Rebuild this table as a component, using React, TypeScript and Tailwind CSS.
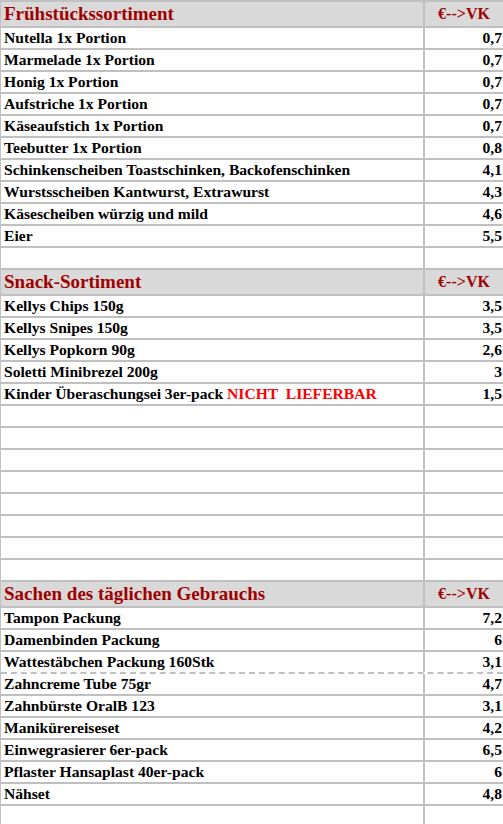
import React from 'react'

type Row = { name?: string; price?: string; note?: string; dashed?: boolean }

const sections: { title: string; rows: Row[] }[] = [
  {
    title: 'Frühstückssortiment',
    rows: [
      { name: 'Nutella 1x Portion', price: '0,7' },
      { name: 'Marmelade 1x Portion', price: '0,7' },
      { name: 'Honig 1x Portion', price: '0,7' },
      { name: 'Aufstriche 1x Portion', price: '0,7' },
      { name: 'Käseaufstich 1x Portion', price: '0,7' },
      { name: 'Teebutter 1x Portion', price: '0,8' },
      { name: 'Schinkenscheiben Toastschinken, Backofenschinken', price: '4,1' },
      { name: 'Wurstsscheiben Kantwurst, Extrawurst', price: '4,3' },
      { name: 'Käsescheiben würzig und mild', price: '4,6' },
      { name: 'Eier', price: '5,5' },
      {},
    ],
  },
  {
    title: 'Snack-Sortiment',
    rows: [
      { name: 'Kellys Chips 150g', price: '3,5' },
      { name: 'Kellys Snipes 150g', price: '3,5' },
      { name: 'Kellys Popkorn 90g', price: '2,6' },
      { name: 'Soletti Minibrezel 200g', price: '3' },
      { name: 'Kinder Überaschungsei 3er-pack', note: 'NICHT  LIEFERBAR', price: '1,5' },
      {}, {}, {}, {}, {}, {}, {}, {},
    ],
  },
  {
    title: 'Sachen des täglichen Gebrauchs',
    rows: [
      { name: 'Tampon Packung', price: '7,2' },
      { name: 'Damenbinden Packung', price: '6' },
      { name: 'Wattestäbchen Packung 160Stk', price: '3,1', dashed: true },
      { name: 'Zahncreme Tube 75gr', price: '4,7' },
      { name: 'Zahnbürste OralB 123', price: '3,1' },
      { name: 'Manikürereiseset', price: '4,2' },
      { name: 'Einwegrasierer 6er-pack', price: '6,5' },
      { name: 'Pflaster Hansaplast 40er-pack', price: '6' },
      { name: 'Nähset', price: '4,8' },
      {},
    ],
  },
]

const font = { fontFamily: '"Liberation Serif", "Times New Roman", serif' }

export default function App() {
  return (
    <div
      className="w-[503px] h-[824px] overflow-hidden bg-white border-l border-t-2 border-[#c0c0c0]"
      style={font}
    >
      {sections.map((s) => (
        <div key={s.title}>
          {/* Kopfzeile */}
          <div className="grid grid-cols-[424px_1fr] h-[26px] bg-[#d9d9d9] border-b-2 border-[#c0c0c0]">
            <div className="border-r-2 border-[#c0c0c0] pl-[3px] text-[19px] font-bold text-[#a00000] leading-[24px]">
              {s.title}
            </div>
            <div className="text-center text-[16px] font-bold text-[#a00000] leading-[24px]">€--&gt;VK</div>
          </div>
          {s.rows.map((r, i) => (
            <div
              key={i}
              className={
                'grid grid-cols-[424px_1fr] h-[22px] border-b-2 border-[#c0c0c0] ' +
                (r.dashed ? 'border-dashed' : '')
              }
            >
              <div className="border-r-2 border-[#c0c0c0] pl-[3px] text-[15.6px] font-bold text-black leading-[20px] whitespace-pre">
                {r.name}
                {r.note && <span className="text-[#ff0000]"> {r.note}</span>}
              </div>
              <div className="text-right pr-[1px] text-[15.6px] font-bold text-black leading-[20px]">{r.price}</div>
            </div>
          ))}
        </div>
      ))}
    </div>
  )
}
